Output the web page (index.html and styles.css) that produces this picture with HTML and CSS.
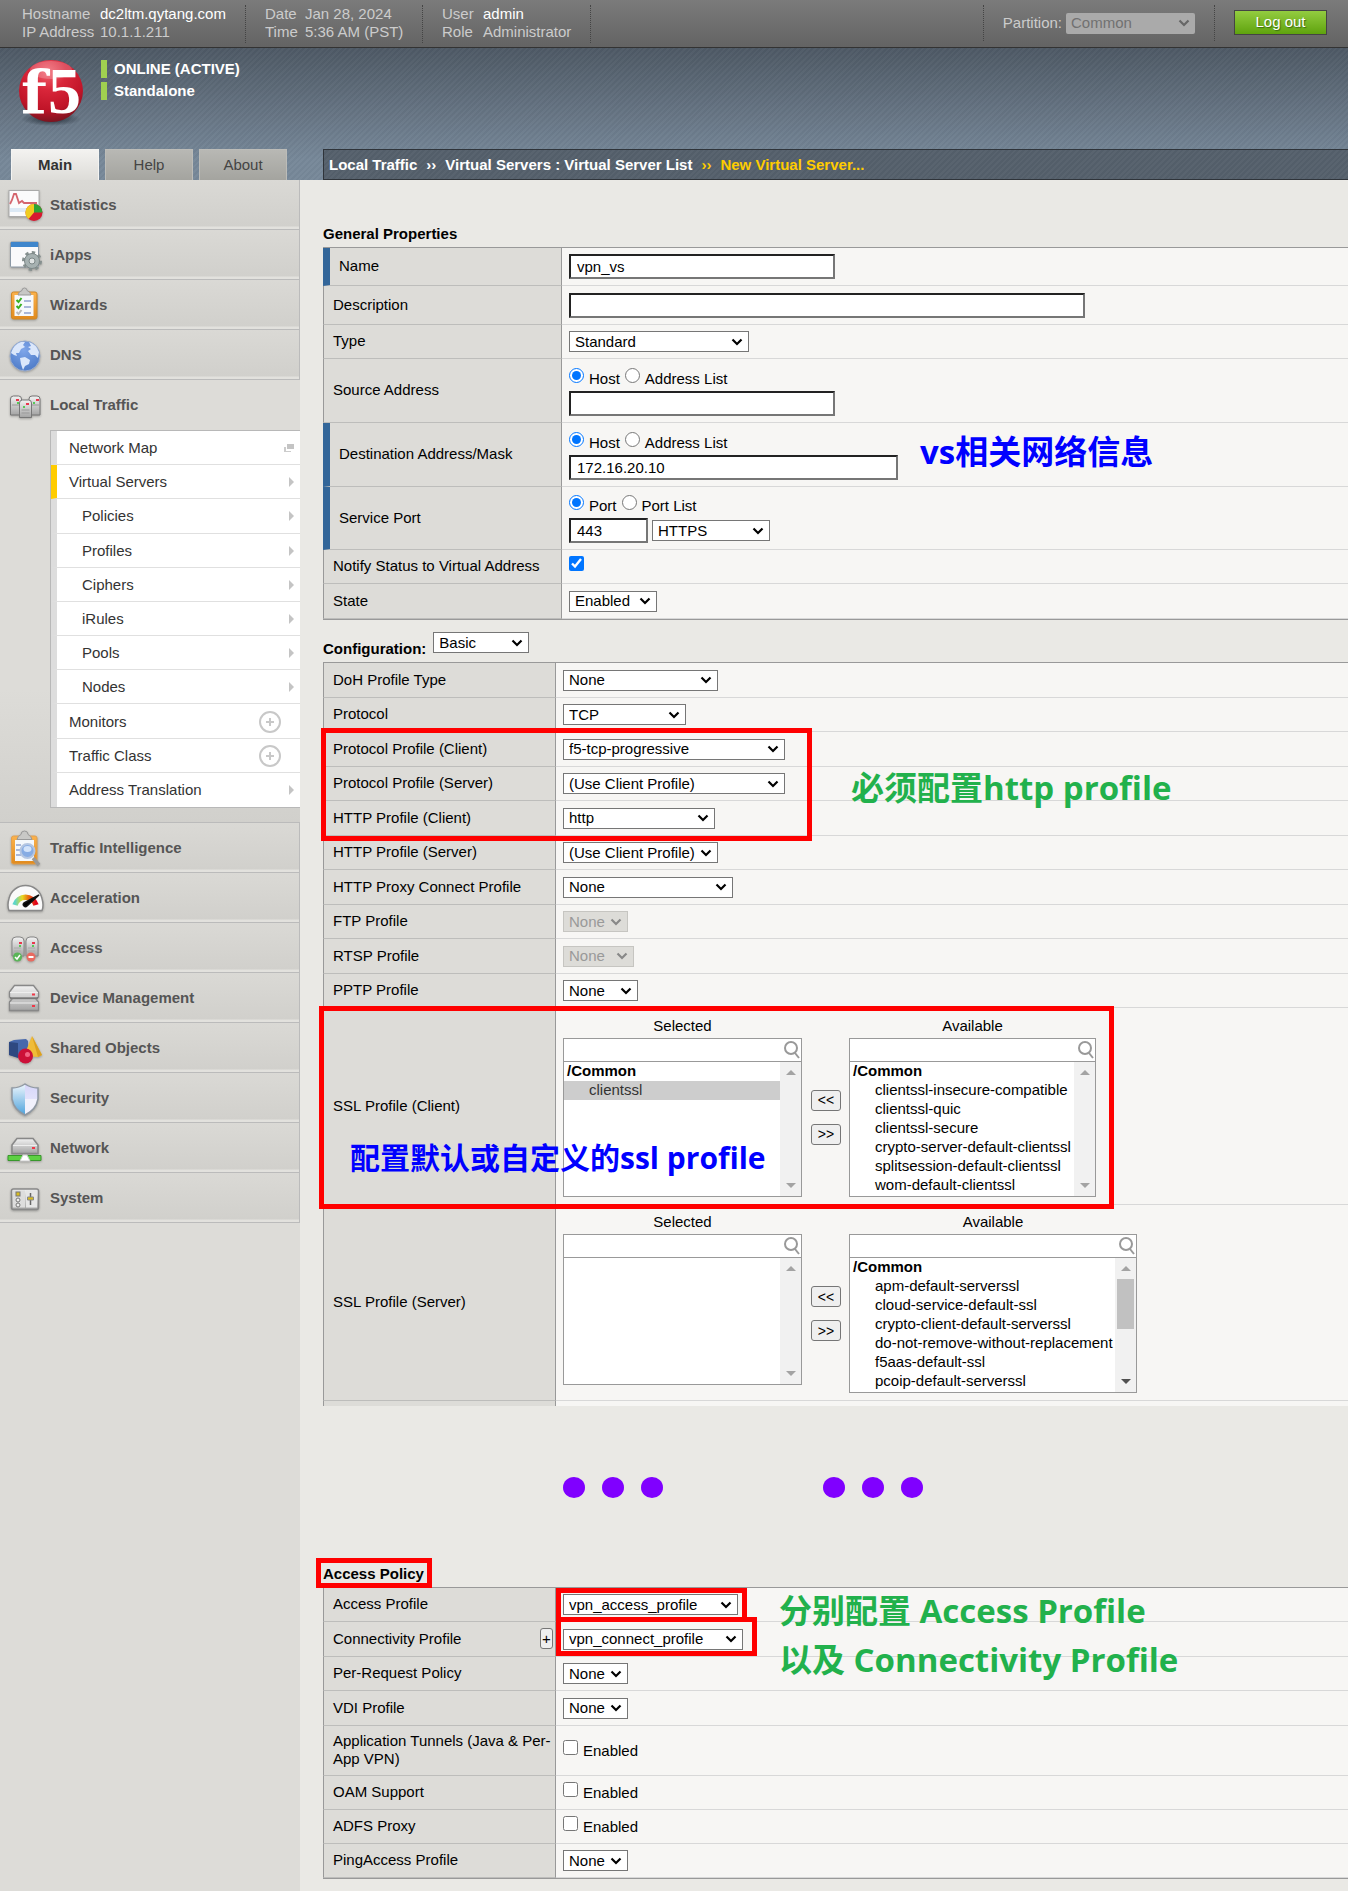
FILE: index.html
```html
<!DOCTYPE html>
<html lang="en">
<head>
<meta charset="utf-8">
<title>New Virtual Server</title>
<link rel="stylesheet" href="styles.css">
</head>
<body>
<header class="topbar">
  <dl class="info host"><dt>Hostname</dt><dd class="strong">dc2ltm.qytang.com</dd><dt>IP Address</dt><dd>10.1.1.211</dd></dl>
  <dl class="info date"><dt>Date</dt><dd>Jan 28, 2024</dd><dt>Time</dt><dd>5:36 AM (PST)</dd></dl>
  <dl class="info user"><dt>User</dt><dd class="strong">admin</dd><dt>Role</dt><dd>Administrator</dd></dl>
  <div class="partition"><label for="partition">Partition:</label><select id="partition" disabled><option>Common</option></select></div>
  <button class="logout" type="button">Log out</button>
</header>

<div class="banner">
  <div class="brand">
    <svg class="logo" viewBox="0 48 101 101" aria-label="f5">
      <defs>
        <radialGradient id="ball" cx=".45" cy=".2" r=".8"><stop offset="0" stop-color="#f0606c"/><stop offset=".35" stop-color="#d9263a"/><stop offset=".75" stop-color="#c01428"/><stop offset="1" stop-color="#7c1420"/></radialGradient>
        <radialGradient id="shade"><stop offset="0" stop-color="#222c36"/><stop offset="1" stop-color="#222c36" stop-opacity="0"/></radialGradient>
      </defs>
      <ellipse cx="51" cy="119" rx="30" ry="7" fill="url(#shade)"/>
      <ellipse cx="51" cy="91" rx="32" ry="31" fill="url(#ball)"/>
      <ellipse cx="51" cy="70" rx="21" ry="9" fill="#fff" opacity=".2"/>
      <text class="logo-f" x="21" y="114">f</text><text class="logo-5" x="48" y="113">5</text>
    </svg>
    <div class="status"><span>ONLINE (ACTIVE)</span><span>Standalone</span></div>
  </div>
  <div class="bar">
    <nav class="tabs"><a class="on" href="#main">Main</a><a href="#help">Help</a><a href="#about">About</a></nav>
    <nav class="crumbs"><a href="#lt">Local Traffic</a><i>››</i><a href="#vs">Virtual Servers : Virtual Server List</a><i class="hot">››</i><a class="hot" href="#new">New Virtual Server...</a></nav>
  </div>
</div>

<div class="layout">
<nav class="side">
  <svg class="defs" aria-hidden="true"><defs>
    <linearGradient id="metal" x1="0" y1="0" x2="0" y2="1"><stop offset="0" stop-color="#f2f2f2"/><stop offset="1" stop-color="#a4a4a4"/></linearGradient>
    <linearGradient id="orange" x1="0" y1="0" x2="0" y2="1"><stop offset="0" stop-color="#fbb24c"/><stop offset="1" stop-color="#e08a1e"/></linearGradient>
    <radialGradient id="globe" cx=".45" cy=".3" r=".7"><stop offset="0" stop-color="#7fa6ea"/><stop offset="1" stop-color="#4f7cc8"/></radialGradient>
    <linearGradient id="gauge"><stop offset="0" stop-color="#5cd6cc"/><stop offset=".35" stop-color="#e8d820"/><stop offset=".6" stop-color="#e87810"/><stop offset="1" stop-color="#e00018"/></linearGradient>
    <linearGradient id="shieldL" x1="0" y1="0" x2="0" y2="1"><stop offset="0" stop-color="#eef6fd"/><stop offset="1" stop-color="#4ea3dc"/></linearGradient>
    <linearGradient id="shieldR" x1="0" y1="0" x2="0" y2="1"><stop offset="0" stop-color="#d6d6fa"/><stop offset="1" stop-color="#eeeefc"/></linearGradient>
  </defs></svg>

  <a class="item" href="#statistics"><svg viewBox="0 0 50 50"><rect x="9" y="10.500" width="30" height="26" fill="#fbfbfc" stroke="#aaa"/><path d="M10 28h28v4h-28z" fill="#dce9f5"/><path d="M10 24l2-4 2-6 2 0 3 9 3-2 2 2h13" fill="none" stroke="#d4656e" stroke-width="1.800"/><circle cx="34" cy="32.500" r="8.500" fill="#d81830"/><path d="M34 32.500V24a8.500 8.500 0 0 0-5.500 15z" fill="#f0cc20"/><path d="M34 32.500V24a8.500 8.500 0 0 1 8.500 8.500z" fill="#2ea336"/></svg>Statistics</a>
  <a class="item" href="#iapps"><svg viewBox="0 0 50 50"><rect x="10.500" y="12" width="28" height="25" rx="1" fill="#fafafb" stroke="#8b98a5"/><path d="M11 12h27v5h-27z" fill="#3f86cc"/><circle cx="32" cy="31" r="8.500" fill="none" stroke="#86908f" stroke-width="3" stroke-dasharray="3.300 3.300"/><circle cx="32" cy="31" r="7.500" fill="#a6b1b1" stroke="#7d8888"/><circle cx="32" cy="31" r="3" fill="#dfe3e3" stroke="#7d8888"/></svg>iApps</a>
  <a class="item" href="#wizards"><svg viewBox="0 0 50 50"><rect x="11.500" y="12" width="25.500" height="27" rx="2" fill="url(#orange)" stroke="#d08828"/><path d="M14.500 15h19v21h-19z" fill="#f6f9fd"/><path d="M18 15a6 6 0 0 1 4-4.500a2.500 2.500 0 0 1 5 0a6 6 0 0 1 4 4.500z" fill="#c8c8c6" stroke="#999"/><path d="M16.500 20l2 2 3-4M16.500 26l2 2 3-4" fill="none" stroke="#38b020" stroke-width="2"/><path d="M16.500 32l2 2 3-4" fill="none" stroke="#bbb" stroke-width="2"/><path d="M24 21h7M24 27h7M24 33h7" stroke="#a9b8da" stroke-width="2"/></svg>Wizards</a>
  <a class="item" href="#dns"><svg viewBox="0 0 50 50"><circle cx="25" cy="26" r="15" fill="url(#globe)" stroke="#9aaccc"/><path d="M11 23q3-9 10-11l4 0-2 3 2 2-4 2-2 4-3 0 1 3-3-1zM20 28l5-1 5 3-1 4-4 2-2 4-2-6zM29 12q7 2 10 10l-1 6-3-3-4 0-3-4 3-2-3-2 3-1z" fill="#dbe7fb"/></svg>DNS</a>

  <div class="open">
    <a class="item plain" href="#local-traffic"><svg viewBox="0 0 50 50"><g fill="url(#metal)" stroke="#777"><path d="M10.500 35V19a3 3 0 0 1 3-3h5a3 3 0 0 1 3 3v16zM29 35V19a3 3 0 0 1 3-3h5a3 3 0 0 1 3 3v16z"/><path d="M19.500 37.500V23a3 3 0 0 1 3-3h6a3 3 0 0 1 3 3v14.500z"/></g><path d="M12 25h7M32 25h7M21.500 30h8M21.500 33h8" stroke="#999"/><path d="M16 19h3v2h-3zM36 19h3v2h-3zM26 23h3v2h-3z" fill="#e8384c"/><path d="M17 22h2v2h-2zM33 22h2v2h-2zM23 26h2v2h-2z" fill="#58c858"/></svg>Local Traffic</a>
    <ul class="sub">
      <li><a href="#network-map">Network Map<svg class="pop" viewBox="0 0 10 8"><path d="M3 0h7v5H3z" fill="#c4c4c4"/><path d="M0 3h2v4h5v1H0z" fill="#ccc"/></svg></a></li>
      <li class="current"><a href="#virtual-servers">Virtual Servers<b class="tri"></b></a></li>
      <li class="deep"><a href="#policies">Policies<b class="tri"></b></a></li>
      <li class="deep"><a href="#profiles">Profiles<b class="tri"></b></a></li>
      <li class="deep"><a href="#ciphers">Ciphers<b class="tri"></b></a></li>
      <li class="deep"><a href="#irules">iRules<b class="tri"></b></a></li>
      <li class="deep"><a href="#pools">Pools<b class="tri"></b></a></li>
      <li class="deep"><a href="#nodes">Nodes<b class="tri"></b></a></li>
      <li><a href="#monitors">Monitors<svg class="plus" viewBox="0 0 22 22"><circle cx="11" cy="11" r="10"/><path d="M7 11h8M11 7v8"/></svg></a></li>
      <li><a href="#traffic-class">Traffic Class<svg class="plus" viewBox="0 0 22 22"><circle cx="11" cy="11" r="10"/><path d="M7 11h8M11 7v8"/></svg></a></li>
      <li><a href="#address-translation">Address Translation<b class="tri"></b></a></li>
    </ul>
  </div>

  <a class="item" href="#ti"><svg viewBox="0 0 50 50"><rect x="11.500" y="13" width="25.500" height="28" rx="2" fill="url(#orange)" stroke="#e0a050"/><path d="M15 17h19v21h-19z" fill="#f4f8fc"/><path d="M17 16.500a7 7 0 0 1 4-5a3.500 3.500 0 0 1 7 0a7 7 0 0 1 4 5z" fill="#c8c8c6" stroke="#999"/><path d="M16 22h5M16 27h4M16 32h5" stroke="#a9b8da" stroke-width="2"/><path d="M33 35l6 7" stroke="#999" stroke-width="3.500"/><circle cx="27.500" cy="28" r="7" fill="#86ace4" stroke="#b4c6e2" stroke-width="2"/><ellipse cx="27.500" cy="26" rx="4" ry="3" fill="#d2e3fa"/></svg>Traffic Intelligence</a>
  <a class="item" href="#acc"><svg viewBox="0 0 50 50"><path d="M9 37.500q-2-5 0-12a17 17 0 0 1 33 0q2 7 0 12z" fill="#fafafa" stroke="#888" stroke-width="1.500"/><path d="M15 32a11 11 0 0 1 21 0" fill="none" stroke="url(#gauge)" stroke-width="5.500"/><path d="M24 30l15-8-12 11a2 2 0 0 1-3-3z" stroke="#111" stroke-width="1.500"/></svg>Acceleration</a>
  <a class="item" href="#access"><svg viewBox="0 0 50 50"><g fill="url(#metal)" stroke="#888"><path d="M12 33V18a4 4 0 0 1 4-4h4a4 4 0 0 1 4 4v15zM26 33V18a4 4 0 0 1 4-4h4a4 4 0 0 1 4 4v15z"/></g><path d="M14 25h7M28 25h7M14 28h7M28 28h7" stroke="#aaa"/><path d="M19 19h3v2h-3zM32 19h3v2h-3z" fill="#e8384c"/><path d="M19 22h2v2h-2zM32 22h2v2h-2z" fill="#58c858"/><circle cx="17.500" cy="34" r="4.500" fill="#5ab558"/><path d="M15 34l2 2 3-4" fill="none" stroke="#fff" stroke-width="1.500"/><circle cx="31" cy="34" r="4.500" fill="#e86a60"/><path d="M28.500 34h5" stroke="#fff" stroke-width="2"/></svg>Access</a>
  <a class="item" href="#dm"><svg viewBox="0 0 50 50"><g fill="url(#metal)" stroke="#888" stroke-width="1.300"><path d="M9.500 19l5-6.500h19l5 6.500v5l-2 1.500h-25l-2-1.500zM9.500 29l3-3.500h23l3 3.500v8.500h-29z"/></g><path d="M10 19.500h28M10 30h28" stroke="#eee"/><path d="M10 25h28" stroke="#666"/><path d="M32 20.500h3v2h-3zM32 32h3v2h-3z" fill="#f03848"/></svg>Device Management</a>
  <a class="item" href="#so"><svg viewBox="0 0 50 50"><path d="M9 19l5-2 12-1 2 2v14l-8 3-11-3z" fill="#4668ac"/><path d="M9 19l9 1v15l-9-3z" fill="#2e4880"/><path d="M32 13l10 19-4 2-14-1z" fill="#f0bc38"/><path d="M32 13l10 19-4 2z" fill="#dca020"/><circle cx="25.500" cy="33" r="7.500" fill="#cc1038"/><circle cx="27.500" cy="31.500" r="2.500" fill="#f26484"/></svg>Shared Objects</a>
  <a class="item" href="#sec"><svg viewBox="0 0 50 50"><path d="M25 11q-6 4-13 4v11q2 11 13 16z" fill="url(#shieldL)"/><path d="M25 11q6 4 13 4v11q-2 11-13 16z" fill="url(#shieldR)"/><path d="M25 26h13q-2 11-13 16z" fill="#f1f1fc"/><path d="M25 11q-6 4-13 4v11q2 11 13 16q11-5 13-16V15q-7 0-13-4z" fill="none" stroke="#8f98a2" stroke-width="1.500"/></svg>Security</a>
  <a class="item" href="#net"><svg viewBox="0 0 50 50"><path d="M12 22l5-6.500h16l5 6.500v8.500h-26z" fill="url(#metal)" stroke="#888" stroke-width="1.500"/><path d="M13 22.500h24" stroke="#eee"/><path d="M32 24h3v2h-3z" fill="#f03848"/><path d="M8 32.500h33v5h-33z" fill="#5dd043" stroke="#38982c"/><path d="M20 38l3-6h4l3 6z" fill="#fff" stroke="#ccc"/></svg>Network</a>
  <a class="item" href="#sys"><svg viewBox="0 0 50 50"><rect x="11.500" y="16" width="27" height="20.500" rx="2" fill="url(#metal)" stroke="#888" stroke-width="1.500"/><path d="M13 17.500h12v17h-12z" fill="#ddd"/><path d="M26 17.500h11v17h-11z" fill="#e6e6e6"/><rect x="16" y="19" width="4" height="4" fill="#d8bc20" stroke="#777"/><circle cx="18" cy="27" r="2" fill="#eee" stroke="#777"/><circle cx="18" cy="32" r="2" fill="#eee" stroke="#777"/><path d="M30.500 20v12" stroke="#666" stroke-width="1.500"/><path d="M27.500 24h6v3h-6z" fill="#d8bc20" stroke="#888"/></svg>System</a>
</nav>

<main class="main">
<section class="block general">
  <h2>General Properties</h2>
  <table>
    <tr class="h38 req"><th><label for="name">Name</label></th><td><input class="text w266" id="name" type="text" value="vpn_vs"></td></tr>
    <tr class="h39"><th><label for="desc">Description</label></th><td><input class="text w516" id="desc" type="text"></td></tr>
    <tr class="h34"><th><label for="type">Type</label></th><td><select class="w180" id="type"><option>Standard</option></select></td></tr>
    <tr class="h64"><th><label for="src">Source Address</label></th><td>
      <div class="opts"><input type="radio" name="src" id="s1" checked><label for="s1">Host</label><input type="radio" name="src" id="s2"><label for="s2">Address List</label></div>
      <input class="text w266" id="src" type="text"></td></tr>
    <tr class="h64 req"><th><label for="dst">Destination Address/Mask</label></th><td>
      <div class="opts"><input type="radio" name="dst" id="d1" checked><label for="d1">Host</label><input type="radio" name="dst" id="d2"><label for="d2">Address List</label></div>
      <input class="text w329" id="dst" type="text" value="172.16.20.10"></td></tr>
    <tr class="h63 req"><th><label for="port">Service Port</label></th><td>
      <div class="opts"><input type="radio" name="port" id="p1" checked><label for="p1">Port</label><input type="radio" name="port" id="p2"><label for="p2">Port List</label></div>
      <div class="pair"><input class="text w79" id="port" type="text" value="443"><select class="w118" aria-label="Service"><option>HTTPS</option></select></div></td></tr>
    <tr class="h34"><th><label for="notify">Notify Status to Virtual Address</label></th><td><div class="opts tick"><input type="checkbox" id="notify" checked></div></td></tr>
    <tr class="h35"><th><label for="state">State</label></th><td><select class="w88" id="state"><option>Enabled</option></select></td></tr>
  </table>
  <p class="note blue note-vs">vs相关网络信息</p>
</section>

<section class="block config">
  <div class="mode"><label for="mode">Configuration:</label><select class="w96" id="mode"><option>Basic</option></select></div>
  <table class="open-end">
    <tr class="h35"><th><label for="c1">DoH Profile Type</label></th><td><select class="w155" id="c1"><option>None</option></select></td></tr>
    <tr class="h34"><th><label for="c2">Protocol</label></th><td><select class="w123" id="c2"><option>TCP</option></select></td></tr>
    <tr class="h35"><th><label for="c3">Protocol Profile (Client)</label></th><td><select class="w222" id="c3"><option>f5-tcp-progressive</option></select></td></tr>
    <tr class="h34"><th><label for="c4">Protocol Profile (Server)</label></th><td><select class="w222" id="c4"><option>(Use Client Profile)</option></select></td></tr>
    <tr class="h35"><th><label for="c5">HTTP Profile (Client)</label></th><td><select class="w152" id="c5"><option>http</option></select></td></tr>
    <tr class="h34"><th><label for="c6">HTTP Profile (Server)</label></th><td><select class="w155" id="c6"><option>(Use Client Profile)</option></select></td></tr>
    <tr class="h35"><th><label for="c7">HTTP Proxy Connect Profile</label></th><td><select class="w170" id="c7"><option>None</option></select></td></tr>
    <tr class="h34"><th><label for="c8">FTP Profile</label></th><td><select class="w65" id="c8" disabled><option>None</option></select></td></tr>
    <tr class="h35"><th><label for="c9">RTSP Profile</label></th><td><select class="w71" id="c9" disabled><option>None</option></select></td></tr>
    <tr class="h34"><th><label for="c10">PPTP Profile</label></th><td><select class="w75" id="c10"><option>None</option></select></td></tr>
    <tr class="h197"><th>SSL Profile (Client)</th><td>
      <div class="mover">
        <div class="pick w239"><label for="l1">Selected</label><div class="box">
          <div class="find"><input type="search" aria-label="Filter selected"><svg viewBox="0 0 16 18"><circle cx="7" cy="7" r="6"/><path d="M11 12l4 5"/></svg></div>
          <div class="list"><select id="l1" multiple><optgroup label="/Common"><option selected>clientssl</option></optgroup></select><div class="scroll"><b class="up"></b><b class="down"></b></div></div></div></div>
        <div class="moves"><button type="button">&lt;&lt;</button><button type="button">&gt;&gt;</button></div>
        <div class="pick w247"><label for="l2">Available</label><div class="box">
          <div class="find"><input type="search" aria-label="Filter available"><svg viewBox="0 0 16 18"><circle cx="7" cy="7" r="6"/><path d="M11 12l4 5"/></svg></div>
          <div class="list"><select id="l2" multiple><optgroup label="/Common"><option>clientssl-insecure-compatible</option><option>clientssl-quic</option><option>clientssl-secure</option><option>crypto-server-default-clientssl</option><option>splitsession-default-clientssl</option><option>wom-default-clientssl</option></optgroup></select><div class="scroll"><b class="up"></b><b class="down"></b></div></div></div></div>
      </div></td></tr>
    <tr class="h196"><th>SSL Profile (Server)</th><td>
      <div class="mover">
        <div class="pick w239"><label for="l3">Selected</label><div class="box">
          <div class="find"><input type="search" aria-label="Filter selected"><svg viewBox="0 0 16 18"><circle cx="7" cy="7" r="6"/><path d="M11 12l4 5"/></svg></div>
          <div class="list short"><select id="l3" multiple></select><div class="scroll"><b class="up"></b><b class="down"></b></div></div></div></div>
        <div class="moves"><button type="button">&lt;&lt;</button><button type="button">&gt;&gt;</button></div>
        <div class="pick w288"><label for="l4">Available</label><div class="box">
          <div class="find"><input type="search" aria-label="Filter available"><svg viewBox="0 0 16 18"><circle cx="7" cy="7" r="6"/><path d="M11 12l4 5"/></svg></div>
          <div class="list"><select id="l4" multiple><optgroup label="/Common"><option>apm-default-serverssl</option><option>cloud-service-default-ssl</option><option>crypto-client-default-serverssl</option><option>do-not-remove-without-replacement</option><option>f5aas-default-ssl</option><option>pcoip-default-serverssl</option></optgroup></select><div class="scroll"><b class="up"></b><b class="thumb"></b><b class="down live"></b></div></div></div></div>
      </div></td></tr>
    <tr class="h5"><th></th><td></td></tr>
  </table>
  <div class="frame frame-http"></div>
  <p class="note green note-http">必须配置http profile</p>
  <div class="frame frame-ssl"></div>
  <p class="note blue note-ssl">配置默认或自定义的ssl profile</p>
</section>

<div class="dots"><div><i></i><i></i><i></i></div><div><i></i><i></i><i></i></div></div>

<section class="block access">
  <h2>Access Policy</h2>
  <table>
    <tr class="h34"><th><label for="a1">Access Profile</label></th><td><select class="w175" id="a1"><option>vpn_access_profile</option></select></td></tr>
    <tr class="h35"><th><div class="with-add"><label for="a2">Connectivity Profile</label><button type="button">+</button></div></th><td><select class="w180" id="a2"><option>vpn_connect_profile</option></select></td></tr>
    <tr class="h34"><th><label for="a3">Per-Request Policy</label></th><td><select class="w65" id="a3"><option>None</option></select></td></tr>
    <tr class="h35"><th><label for="a4">VDI Profile</label></th><td><select class="w65" id="a4"><option>None</option></select></td></tr>
    <tr class="h50"><th>Application Tunnels (Java &amp; Per-App VPN)</th><td><div class="opts tick"><input type="checkbox" id="a5"><label for="a5">Enabled</label></div></td></tr>
    <tr class="h34"><th>OAM Support</th><td><div class="opts tick"><input type="checkbox" id="a6"><label for="a6">Enabled</label></div></td></tr>
    <tr class="h34"><th>ADFS Proxy</th><td><div class="opts tick"><input type="checkbox" id="a7"><label for="a7">Enabled</label></div></td></tr>
    <tr class="h34"><th><label for="a8">PingAccess Profile</label></th><td><select class="w65" id="a8"><option>None</option></select></td></tr>
  </table>
  <div class="frame frame-title"></div>
  <div class="frame frame-access"></div>
  <div class="frame frame-connect"></div>
  <p class="note green note-access">分别配置 Access Profile<br>以及 Connectivity Profile</p>
</section>
</main>
</div>
</body>
</html>
```
FILE: styles.css
```css
* { box-sizing: border-box; }
body {
  margin: 0;
  min-height: 100vh;
  display: flex;
  flex-direction: column;
  background: #eae9e5;
  color: #000;
  font: 15px/18px "Liberation Sans", Arial, sans-serif;
}
a { color: inherit; text-decoration: none; }
button, input, select { font: inherit; color: inherit; margin: 0; }

/* top bar */
.topbar {
  display: flex;
  align-items: flex-start;
  height: 48px;
  padding-top: 5px;
  border-bottom: 1px solid #333;
  background: linear-gradient(#7b7b7b, #636363);
  color: #ccc;
}
.info {
  display: grid;
  grid-template-columns: 78px 1fr;
  align-content: start;
  margin: 0;
  height: 38px;
  padding-left: 19px;
  border-right: 1px dotted #444;
  white-space: nowrap;
}
.info dd { margin: 0; }
.info .strong { color: #fff; }
.host { width: 246px; padding-left: 22px; }
.date { width: 177px; grid-template-columns: 40px 1fr; }
.user { width: 168px; grid-template-columns: 41px 1fr; }
.partition {
  display: flex;
  align-items: center;
  gap: 4px;
  height: 36px;
  margin-left: auto;
  padding: 0 19px;
  border: 0 dotted #444;
  border-width: 0 1px;
}
.partition select {
  width: 129px;
  border: 0;
  border-radius: 2px;
}
.logout {
  width: 93px;
  height: 25px;
  margin: 5px 21px 0 19px;
  padding: 0 0 2px;
  border: 1px solid #444;
  background: linear-gradient(#93cc40, #5fa30e);
  color: #fff;
  text-shadow: 1px 1px 1px #3c6c10;
}

/* banner */
.banner {
  background:
    repeating-linear-gradient(135deg, #ffffff06 0 2px, #00000006 2px 4px),
    linear-gradient(#4e5965, #778899 85%);
}
.brand { display: flex; height: 101px; }
.logo { width: 101px; height: 101px; }
.logo text { fill: #fff; font-weight: bold; }
.logo-f { font: bold 60px "DejaVu Serif", serif; }
.logo-5 { font: bold 66px "Liberation Serif", serif; }
.status {
  display: flex;
  flex-direction: column;
  gap: 4px;
  padding-top: 12px;
  color: #fff;
  font-weight: bold;
}
.status span { padding-left: 7px; border-left: 6px solid #a0d050; }
.bar { display: flex; height: 31px; }
.tabs { display: flex; gap: 6px; width: 323px; padding-left: 11px; }
.tabs a {
  width: 88px;
  border: 1px solid #bcbcb8;
  border-bottom: 0;
  background: linear-gradient(#b8b8b4, #a4a49f);
  color: #444;
  line-height: 30px;
  text-align: center;
}
.tabs .on {
  border-color: #f4f4f2;
  background: linear-gradient(#f3f2f0, #dddcd8);
  color: #333;
  font-weight: bold;
}
.crumbs {
  display: flex;
  flex: 1;
  gap: 9px;
  padding-left: 5px;
  border: 1px solid #2f343a;
  border-right: 0;
  background: repeating-linear-gradient(135deg, #ffffff06 0 2px, #00000006 2px 4px), #55606c;
  color: #fff;
  font-weight: bold;
  line-height: 29px;
  white-space: nowrap;
}
.crumbs i { font-style: normal; }
.crumbs .hot { color: #fc0; }

/* side menu */
.layout { display: grid; grid-template-columns: 300px 1fr; flex: 1; }
.side { background: #dddcd8; color: #555; }
.defs { position: absolute; width: 0; height: 0; }
.item {
  display: flex;
  align-items: center;
  height: 50px;
  border: 0 solid #bbb;
  border-width: 0 1px 1px 0;
  background: linear-gradient(#dad9d5, #d1d0cc 46px, #e2e1dd 47px);
  font-weight: bold;
}
.item svg { width: 50px; height: 50px; filter: drop-shadow(0 1px 1px #0004); }
.item.plain { border-color: transparent; background: none; }
.open {
  padding-bottom: 14px;
  border-bottom: 1px solid #bbb;
  background: linear-gradient(#dddcd8 70%, #d1d0cc);
}
.sub {
  display: grid;
  grid-auto-rows: 1fr;
  height: 378px;
  margin: 0 0 0 50px;
  padding: 0;
  border: 1px solid #b8b8b8;
  border-right: 0;
  list-style: none;
  color: #333;
}
.sub li { border-left: 6px solid #ddd; border-bottom: 1px solid #e0e0e0; background: #fff; }
.sub li:last-child { border-bottom: 0; }
.sub .current { border-left-color: #fc0; }
.sub a {
  display: flex;
  align-items: center;
  justify-content: space-between;
  height: 100%;
  padding: 1px 6px 0 12px;
}
.sub .deep a { padding-left: 25px; }
.tri { border: 5px solid transparent; border-left-color: #c4c4c4; border-right: 0; }
.pop { width: 10px; height: 8px; }
.plus { width: 22px; height: 22px; margin-right: 13px; fill: none; stroke: #c8c8c8; stroke-width: 2; }

/* main form */
.main { padding: 39px 0 12px 23px; }
.block { position: relative; }
h2 { height: 28px; margin: 0; font-size: 15px; line-height: 30px; }
table {
  width: 100%;
  border: 1px solid #999;
  border-width: 1px 0;
  border-collapse: separate;
  border-spacing: 0;
  table-layout: fixed;
}
.open-end { border-bottom: 0; }
th {
  width: 233px;
  padding: 0 2px 1px 9px;
  border: 1px solid #999;
  border-top: 0;
  border-bottom-color: #bdbdbb;
  background: #dddcd8;
  font-weight: normal;
  text-align: left;
}
.general th { width: 239px; }
.req th { border-left: 7px solid #369; }
td { padding: 0 7px; border-bottom: 1px solid #d8d8d8; background: #f7f6f4; }
.h5 th, .h5 td { border-bottom: 0; }
.h5 { height: 5px; }
.h34 { height: 34px; }
.h35 { height: 35px; }
.h38 { height: 38px; }
.h39 { height: 39px; }
.h50 { height: 50px; }
.h63 { height: 63px; }
.h64 { height: 64px; }
.h196 { height: 196px; }
.h197 { height: 197px; }

select {
  display: block;
  height: 21px;
  padding: 0 5px;
  appearance: none;
  border: 1px solid #767676;
  border-radius: 0;
  background: #fff url("data:image/svg+xml,%3Csvg xmlns='http://www.w3.org/2000/svg' width='12' height='8'%3E%3Cpath d='M1.5 1.500l4.500 4.500 4.500-4.500' fill='none' stroke='%23000' stroke-width='2.200'/%3E%3C/svg%3E") no-repeat right 5px center;
  line-height: 18px;
}
select:disabled {
  opacity: 1;
  border-color: #c6c5c1;
  background-color: #dddcd8;
  background-image: url("data:image/svg+xml,%3Csvg xmlns='http://www.w3.org/2000/svg' width='12' height='8'%3E%3Cpath d='M1.5 1.500l4.500 4.500 4.500-4.500' fill='none' stroke='%23888' stroke-width='2.200'/%3E%3C/svg%3E");
  color: #999;
}
.partition select:disabled {
  background-color: #aaa;
  background-image: url("data:image/svg+xml,%3Csvg xmlns='http://www.w3.org/2000/svg' width='12' height='8'%3E%3Cpath d='M1.5 1.500l4.500 4.500 4.500-4.500' fill='none' stroke='%23666' stroke-width='2.200'/%3E%3C/svg%3E");
  color: #717171;
}
.text {
  display: block;
  height: 25px;
  padding: 0 6px;
  border: 2px solid #767676;
  border-top-color: #222;
  border-left-color: #222;
  background: #fff;
}
.w65 { width: 65px; }
.w71 { width: 71px; }
.w75 { width: 75px; }
.w79 { width: 79px; }
.w88 { width: 88px; }
.w96 { width: 96px; }
.w118 { width: 118px; }
.w123 { width: 123px; }
.w152 { width: 152px; }
.w155 { width: 155px; }
.w170 { width: 170px; }
.w175 { width: 175px; }
.w180 { width: 180px; }
.w222 { width: 222px; }
.w239 { width: 239px; }
.w247 { width: 247px; }
.w266 { width: 266px; }
.w288 { width: 288px; }
.w329 { width: 329px; }
.w516 { width: 516px; }

.opts { display: flex; gap: 5px; height: 25px; padding-top: 2px; line-height: 21px; }
.opts input { width: 15px; height: 15px; accent-color: #0075ff; }
.opts.tick { height: 21px; padding-top: 0; }
.pair { display: flex; align-items: center; gap: 4px; }

.mode {
  display: flex;
  align-items: flex-end;
  gap: 7px;
  height: 42px;
  padding-bottom: 3px;
  font-weight: bold;
  line-height: 20px;
}
.mode select { margin-bottom: 6px; font-weight: normal; }

/* paired lists */
.mover { display: flex; }
.pick > label { display: block; margin-bottom: 2px; line-height: 20px; text-align: center; }
.box { border: 1px solid #999; background: #fff; }
.find { display: flex; align-items: center; height: 23px; padding-right: 1px; border-bottom: 1px solid #999; }
.find input { flex: 1; min-width: 0; height: 20px; padding: 0 4px; border: 0; background: none; }
.find svg { width: 16px; height: 18px; fill: none; stroke: #999; stroke-width: 2; }
.list { display: flex; height: 134px; }
.list.short { height: 126px; }
.list select {
  flex: 1;
  min-width: 0;
  height: 100%;
  padding: 0;
  overflow: hidden;
  border: 0;
  background: none;
}
.list optgroup { padding: 0 1px; line-height: 19px; }
.list option { min-height: 19px; margin: 0 -1px; padding: 0 0 0 25px; line-height: 19px; }
.list option:checked { background: #cdcdcd; color: #333; }
.scroll {
  display: flex;
  flex-direction: column;
  justify-content: space-between;
  width: 21px;
  padding: 8px 1px;
  background: #f1f1f1;
}
.scroll b { align-self: center; border: 5px solid transparent; }
.scroll .up { border-top: 0; border-bottom-color: #a3a3a3; }
.scroll .down { border-bottom: 0; border-top-color: #a3a3a3; }
.scroll .live { border-top-color: #505050; }
.scroll .thumb { width: 17px; height: 50px; margin: 8px 0 auto; border: 0; background: #c1c1c1; }
.moves { display: flex; flex-direction: column; justify-content: center; gap: 13px; padding: 22px 8px 0 9px; }
.moves button, .with-add button {
  height: 21px;
  padding: 0;
  border: 1px solid #767676;
  border-radius: 3px;
  background: #efefef;
  line-height: 18px;
}
.moves button { width: 30px; font-size: 14px; }
.with-add { display: flex; align-items: center; justify-content: space-between; }
.with-add button { width: 13px; }

.dots { display: flex; gap: 160px; padding: 71px 0 61px 240px; }
.dots div { display: flex; gap: 17px; }
.dots i { width: 22px; height: 21px; border-radius: 50%; background: #8000ff; }

/* markup laid over the form */
.frame { position: absolute; border: 5px solid #f00; pointer-events: none; }
.frame-http { left: -2px; top: 108px; width: 491px; height: 113px; }
.frame-ssl { left: -4px; top: 386px; width: 795px; height: 203px; }
.frame-title { left: -7px; top: -1px; width: 116px; height: 30px; }
.frame-access { left: 233px; top: 29px; width: 191px; height: 34px; }
.frame-connect { left: 233px; top: 58px; width: 201px; height: 39px; }
.note {
  position: absolute;
  margin: 0;
  font: bold 33px/49px "Open Sans", "Noto Sans CJK SC", sans-serif;
  white-space: nowrap;
}
.blue { color: #00f; }
.green { color: #22b14c; }
.note-vs { left: 597px; top: 208px; }
.note-http { left: 528px; top: 143px; }
.note-ssl { left: 27px; top: 513px; font-size: 30px; }
.note-access { left: 456px; top: 27px; }
```
